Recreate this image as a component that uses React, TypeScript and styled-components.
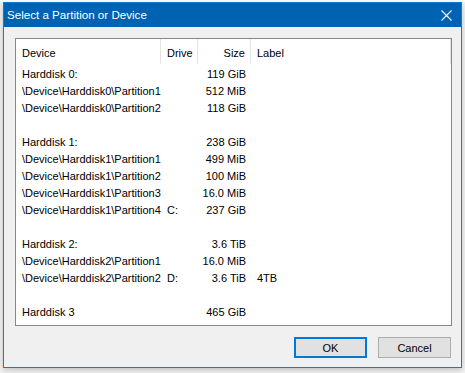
import React from "react";
import styled, { createGlobalStyle } from "styled-components";

const Global = createGlobalStyle`
  html, body { margin: 0; padding: 0; background: #f3f3f3; }
  body { font-family: "Liberation Sans", Arial, sans-serif; width: 465px; height: 373px; overflow: hidden; }
`;

const Page = styled.div`
  width: 465px;
  height: 373px;
  padding: 2px 0 0 3px;
  box-sizing: border-box;
  background: linear-gradient(#ffffff 0 2px, #f3f3f3 2px);
`;

const Window = styled.div`
  width: 459px;
  height: 366px;
  box-sizing: border-box;
  border: 1px solid #1979ca;
  display: flex;
  flex-direction: column;
  background: #f0f0f0;
  box-shadow: 0 2px 6px rgba(0, 0, 0, 0.22);
`;

const TitleBar = styled.div`
  height: 24px;
  background: #0063b1;
  display: flex;
  align-items: center;
  justify-content: space-between;
  color: #fff;
`;

const Title = styled.span`
  font-size: 11.6px;
  padding-left: 3px;
  margin-top: -1px;
`;

const CloseBtn = styled.div`
  width: 30px;
  height: 24px;
  display: flex;
  align-items: center;
  justify-content: center;
`;

const Body = styled.div`
  flex: 1;
  display: flex;
  flex-direction: column;
  padding: 11px 9px 8px 11px;
`;

const ListBox = styled.div`
  height: 288px;
  box-sizing: border-box;
  border: 1px solid #828790;
  background: #fff;
  overflow: hidden;
`;

const Grid = styled.div`
  display: grid;
  grid-template-columns: 145px 37px 53px 1fr;
`;

const HeaderCell = styled.div<{ $right?: boolean }>`
  height: 25px;
  display: flex;
  align-items: center;
  justify-content: ${(p) => (p.$right ? "flex-end" : "flex-start")};
  padding: 3px ${(p) => (p.$right ? "5px" : "0")} 0 ${(p) => (p.$right ? "0" : "6px")};
  border-right: 1px solid #e3e3e3;
  font-size: 11px;
  color: #000;
  box-sizing: border-box;
  margin-bottom: 1px;
`;

const Cell = styled.div<{ $right?: boolean }>`
  height: 17px;
  box-sizing: border-box;
  padding-top: 2px;
  line-height: 15px;
  font-size: 11px;
  color: #000;
  white-space: nowrap;
  text-align: ${(p) => (p.$right ? "right" : "left")};
  padding-left: ${(p) => (p.$right ? "0" : "6px")};
  padding-right: ${(p) => (p.$right ? "5px" : "0")};
`;

const ButtonRow = styled.div`
  display: flex;
  justify-content: flex-end;
  gap: 11px;
  margin-top: 11px;
  padding-right: 1px;
`;

const Button = styled.div<{ $default?: boolean }>`
  width: 73px;
  height: 21px;
  box-sizing: border-box;
  background: #e1e1e1;
  border: ${(p) => (p.$default ? "2px solid #0078d7" : "1px solid #adadad")};
  display: flex;
  align-items: center;
  justify-content: center;
  font-size: 11px;
  color: #000;
`;

type Row = [string, string, string, string];

const rows: Row[] = [
  ["Harddisk 0:", "", "119 GiB", ""],
  ["\\Device\\Harddisk0\\Partition1", "", "512 MiB", ""],
  ["\\Device\\Harddisk0\\Partition2", "", "118 GiB", ""],
  ["", "", "", ""],
  ["Harddisk 1:", "", "238 GiB", ""],
  ["\\Device\\Harddisk1\\Partition1", "", "499 MiB", ""],
  ["\\Device\\Harddisk1\\Partition2", "", "100 MiB", ""],
  ["\\Device\\Harddisk1\\Partition3", "", "16.0 MiB", ""],
  ["\\Device\\Harddisk1\\Partition4", "C:", "237 GiB", ""],
  ["", "", "", ""],
  ["Harddisk 2:", "", "3.6 TiB", ""],
  ["\\Device\\Harddisk2\\Partition1", "", "16.0 MiB", ""],
  ["\\Device\\Harddisk2\\Partition2", "D:", "3.6 TiB", "4TB"],
  ["", "", "", ""],
  ["Harddisk 3", "", "465 GiB", ""],
];

export default function App() {
  return (
    <>
      <Global />
      <Page>
        <Window>
          <TitleBar>
            <Title>Select a Partition or Device</Title>
            <CloseBtn>
              <svg width="11" height="11" viewBox="0 0 11 11">
                <path d="M0.5 0.5 L10.5 10.5 M10.5 0.5 L0.5 10.5" stroke="#fff" strokeWidth="1.1" fill="none" />
              </svg>
            </CloseBtn>
          </TitleBar>
          <Body>
            <ListBox>
              <Grid>
                <HeaderCell>Device</HeaderCell>
                <HeaderCell>Drive</HeaderCell>
                <HeaderCell $right>Size</HeaderCell>
                <HeaderCell>Label</HeaderCell>
                {rows.map((r, i) => (
                  <React.Fragment key={i}>
                    <Cell>{r[0]}</Cell>
                    <Cell>{r[1]}</Cell>
                    <Cell $right>{r[2]}</Cell>
                    <Cell>{r[3]}</Cell>
                  </React.Fragment>
                ))}
              </Grid>
            </ListBox>
            <ButtonRow>
              <Button $default>OK</Button>
              <Button>Cancel</Button>
            </ButtonRow>
          </Body>
        </Window>
      </Page>
    </>
  );
}
